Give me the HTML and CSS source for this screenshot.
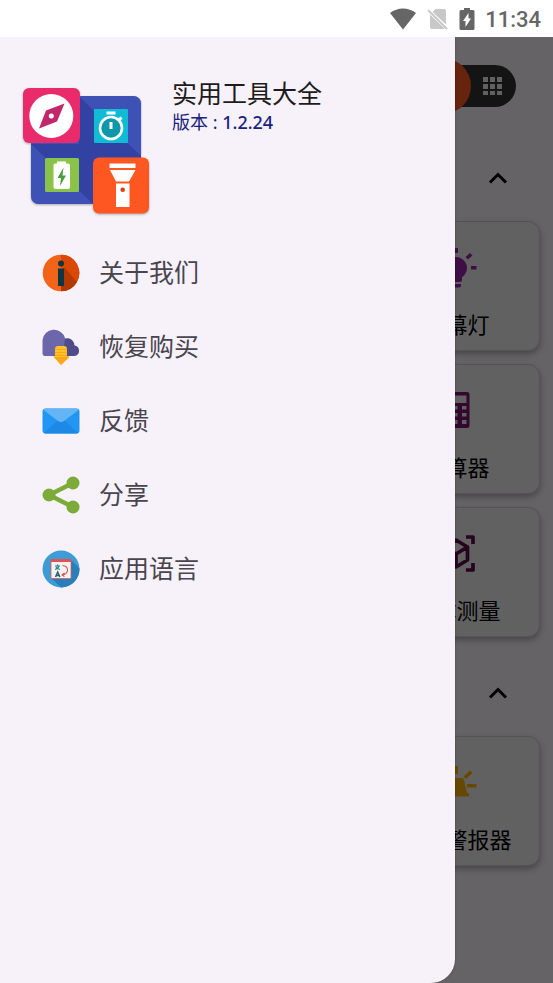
FILE: index.html
```
<!DOCTYPE html>
<html lang="zh-CN">
<head>
    <meta charset="UTF-8">
    <meta name="viewport" content="width=device-width, initial-scale=1.0">
    <title>实用工具大全</title>
    <link rel="stylesheet" href="styles.css">
</head>
<body>

<div class="status-bar">
    <svg width="28" height="22" viewBox="0 0 28 22"><path fill="#666" d="M1 5C8.500-1 19.500-1 27 5L14 21.500z"/></svg>
    <svg width="22" height="22" viewBox="0 0 22 22"><path fill="#c8c8c8" d="M8.500 1H17a2 2 0 0 1 2 2v13.500L5.500 4zM3 6.500L18 21H5a2 2 0 0 1-2-2z"/><path stroke="#c8c8c8" stroke-width="2" d="M1 2l19 19"/></svg>
    <svg width="16" height="22" viewBox="0 0 16 22"><path fill="#666" d="M5 0h6v2h3q1.500 0 1.500 1.500v17q0 1.500-1.500 1.500H2q-1.500 0-1.500-1.500v-17Q.5 2 2 2h3z"/><path fill="#fff" d="M9.500 5v5.500H12L6.500 19v-6H4z"/></svg>
    <span class="clock">11:34</span>
</div>

<div class="screen">
    <main class="home">
        <div class="toolbar">
            <button class="view-switch" aria-label="网格视图">
                <span class="knob"></span>
                <svg width="20" height="20" viewBox="0 0 20 20"><path fill="#f2f2f2" d="M0 1h5v5H0zM7 1h5v5H7zM14 1h5v5h-5zM0 8h5v5H0zM7 8h5v5H7zM14 8h5v5h-5zM0 15h5v4H0zM7 15h5v4H7zM14 15h5v4h-5z"/></svg>
            </button>
        </div>

        <section>
            <div class="section-head">
                <button class="collapse" aria-label="收起"><svg width="20" height="14" viewBox="0 0 20 14"><path fill="none" stroke="#000" stroke-width="3" d="M2 11.500l8-8 8 8"/></svg></button>
            </div>
            <div class="grid">
                <button class="card">
                    <svg width="40" height="40" viewBox="0 0 40 40" fill="#9c27b0"><path d="M19 9a11 11 0 0 1 6 20.200V32q0 2-2 2h-8q-2 0-2-2v-2.800A11 11 0 0 1 19 9zM14 36h10v1.500q0 2-2 2h-6q-2 0-2-2zM17 0h4v5h-4zM34 18h5.500v3.500H34zM0 18h4v3.500H0zM28.500 9L33 5l2.500 2.500L31 11.500zM9.500 9L5 5 2.500 7.500 7 11.500z"/></svg>
                    <span>屏幕灯</span>
                </button>
                <button class="card">
                    <svg width="40" height="40" viewBox="0 0 40 40"><path fill="#7d1470" fill-rule="evenodd" d="M8 1h22q2.500 0 2.500 2.500v31Q32.500 37 30 37H8q-2.500 0-2.500-2.500v-31Q5.500 1 8 1zM9 4.500V12h20.500V4.500zM9 15h3.500v3.500H9zM16.500 15h4v3.500h-4zM25 15h4.500v3.500H25zM9 22h3.500v3.500H9zM16.500 22h4v3.500h-4zM25 22h4.500v3.500H25zM9 29h3.500v4H9zM16.500 29h4v4h-4zM25 29h4.500v4H25z"/></svg>
                    <span>计算器</span>
                </button>
                <button class="card">
                    <svg width="40" height="40" viewBox="0 0 40 40" fill="none" stroke="#600c4c" stroke-width="3.700" stroke-linejoin="round"><path d="M29 3h7v7M29 36h7v-7M9 3H3v7M9 36H3v-7M19 6l11.500 7v13L19 33 7.500 26V13zM7.500 13L19 20l11.500-7M19 20v13"/></svg>
                    <span>立体测量</span>
                </button>
            </div>
        </section>

        <section class="next">
            <div class="section-head">
                <button class="collapse" aria-label="收起"><svg width="20" height="14" viewBox="0 0 20 14"><path fill="none" stroke="#000" stroke-width="3" d="M2 11.500l8-8 8 8"/></svg></button>
            </div>
            <div class="grid">
                <button class="card">
                    <svg width="40" height="40" viewBox="0 0 40 40" fill="#ffb300"><path d="M13 15h12q1.500 0 2 2l3 13h2v3.500H6V30h2l3-13q.5-2 2-2zM17 3h4v8h-4zM30 21h9.500v3.500H30zM0 21h8v3.500H0zM26.500 13.500l6.500-6 2.500 2.500-6.500 6zM11.500 13.500L5 7.500 2.500 10 9 16z"/></svg>
                    <span>声音警报器</span>
                </button>
            </div>
        </section>
    </main>

    <div class="scrim"></div>

    <nav class="drawer">
        <header class="about">
            <svg class="logo" width="128" height="130" viewBox="0 0 128 130">
                <rect x="9" y="10" width="110" height="108" rx="8" fill="#3f51b5"/>
                <path fill="#303f9f" opacity=".8" d="M57 10l62 60v48H71L9 58h48z"/>
                <path fill="#3f51b5" opacity=".7" d="M57 10h54q8 0 8 8v40L94 57 70 23zM9 59l14 13v34h34l14 12H17q-8 0-8-8z"/>
                <rect x="1" y="2" width="57" height="55" rx="6" fill="#e92a6b"/>
                <circle cx="29.300" cy="30" r="22" fill="#fff"/>
                <path fill="#c2276b" d="M42.500 17.500L24 24.500 17 42.500l18-7z"/>
                <circle cx="29.300" cy="30" r="2.500" fill="#fff"/>
                <rect x="72" y="23" width="34" height="34" rx="1" fill="#0fbcd4"/>
                <circle cx="89" cy="42" r="11" fill="#0e98a9" stroke="#fff" stroke-width="2.600"/>
                <path stroke="#fff" stroke-width="3" d="M84.500 27h9M89 36v7M97 34l2.500-2.500"/>
                <rect x="23" y="72" width="34" height="34" rx="1.500" fill="#8bc34a"/>
                <path fill="#fff" d="M35 75.500h9v2h2q2 0 2 2V101q0 2-2 2H33.500q-2 0-2-2V79.500q0-2 2-2H35z"/>
                <path fill="#4f9a3a" d="M41.500 81.500L35.500 92H39l-1 8 6-10.500h-3.500z"/>
                <rect x="71" y="71.500" width="56" height="56" rx="6" fill="#ff5722"/>
                <path fill="#fff" d="M87.500 77.500h26V82h-26zM88 84h25.500L107 95.500H94zM94 97.500h13.500v23.500H94z"/>
                <circle cx="100.700" cy="103.700" r="2.300" fill="#d84315"/>
            </svg>
            <div>
                <h1>实用工具大全</h1>
                <p>版本 : <span class="version">1.2.24</span></p>
            </div>
        </header>

        <a class="item" href="#">
            <svg width="38" height="38" viewBox="0 0 38 38"><circle cx="19" cy="19" r="18.300" fill="#f26418"/><path fill="#d94905" d="M19 .7a18.300 18.300 0 0 1 15.500 28L19 13z"/><path fill="#b23a02" d="M22 13l13 15A18.300 18.300 0 0 1 19 37.300V32l3-1z"/><circle cx="19" cy="9.500" r="3" fill="#0f3443"/><path fill="#0f3443" d="M16 14.500h6V32h-6z"/></svg>
            <span>关于我们</span>
        </a>
        <a class="item" href="#">
            <svg width="38" height="38" viewBox="0 0 38 38"><path fill="#4f4c8c" d="M18 28V15a7.500 7.500 0 0 1 14.500 2.500A5.300 5.300 0 0 1 32.500 28z"/><path fill="#6c66aa" d="M3 28q-2.500 0-2.500-3V12A11.500 11.500 0 0 1 23 10l-2 18z"/><path fill="#ffc425" d="M13 21q0-3 3-3h6q3 0 3 3v7h2.500L19 37l-8-9h2z"/><path fill="#ffa61a" d="M13 24h12v1H13zM13 27h12v1H13zM13 21h12v1H13zM12 29h15.500L19 37z"/></svg>
            <span>恢复购买</span>
        </a>
        <a class="item" href="#">
            <svg width="38" height="38" viewBox="0 0 38 38"><rect x=".5" y="6.500" width="37" height="25" rx="3" fill="#2196f3"/><path fill="#1e88e5" d="M2 31L15 19h8l13 12q-1 .5-2 .5H4q-1 0-2-.5z"/><path fill="#64b5f6" d="M1.500 8Q2 6.500 4 6.500h30q2 0 2.500 1.500L22 19q-3 2.200-6 0z"/></svg>
            <span>反馈</span>
        </a>
        <a class="item" href="#">
            <svg width="38" height="38" viewBox="0 0 38 38"><path fill="none" stroke="#7cab3a" stroke-width="4.500" d="M31 7L7 19l24 12"/><g fill="#7cab3a"><circle cx="31" cy="7" r="6.500"/><circle cx="7" cy="19" r="6.500"/><circle cx="31" cy="31" r="6.500"/></g></svg>
            <span>分享</span>
        </a>
        <a class="item" href="#">
            <svg width="38" height="38" viewBox="0 0 38 38"><circle cx="19" cy="19" r="18.500" fill="#3d9bd6"/><path fill="#2a7fba" d="M29 10l8.500 8.500A18.500 18.500 0 0 1 19 37.500L9 28z"/><path fill="#f5f3f2" stroke="#dc5a5a" stroke-width=".8" d="M9 9.500h20v19H9z"/><path fill="#e05353" d="M9 9h20v3H9z"/><path fill="none" stroke="#1f7f86" stroke-width="1.200" d="M13 16h5M15.500 14.500V16M17 16q-.5 2.500-4 3.500M14 17q1 2 4 2.500"/><path fill="none" stroke="#1d6670" stroke-width="1.500" d="M13.500 27l2.200-5 2.200 5M14 25.500h3.500"/><path fill="none" stroke="#d9534f" stroke-width="1.100" d="M20.500 15.500q5 .5 5 4.500t-5 5M22.500 23l-2.500 2 2.500 1.500"/></svg>
            <span>应用语言</span>
        </a>
    </nav>
</div>

</body>
</html>
```
FILE: styles.css
```
* {
    box-sizing: border-box;
}
body {
    margin: 0;
    min-height: 100vh;
    display: flex;
    flex-direction: column;
    font-family: "Noto Sans CJK SC", sans-serif;
    background-color: #fff;
}
svg {
    display: block;
    flex: none;
}
button {
    padding: 0;
    border: none;
    background: none;
    font-family: inherit;
    cursor: pointer;
}

/* Status bar */
.status-bar {
    height: 37px;
    padding: 0 12px;
    display: flex;
    align-items: center;
    justify-content: flex-end;
    gap: 10px;
}
.clock {
    padding-top: 3px;
    font-family: Roboto, sans-serif;
    font-size: 22px;
    font-weight: 500;
    line-height: 24px;
    color: #666;
}

/* Home screen under the drawer */
.screen {
    position: relative;
    flex: 1;
    overflow: hidden;
    background-color: #fef7ff;
}
.home {
    padding: 0 13px;
}
.toolbar {
    padding: 28px 24px;
    display: flex;
    justify-content: flex-end;
}
.view-switch {
    width: 101px;
    height: 42px;
    padding-right: 13px;
    display: flex;
    align-items: center;
    justify-content: space-between;
    border-radius: 21px;
    background-color: #343434;
}
.knob {
    width: 56px;
    height: 56px;
    border-radius: 50%;
    background-color: #ff5722;
}
.next {
    margin-top: 13px;
}
.section-head {
    height: 86px;
    padding-right: 32px;
    display: flex;
    align-items: center;
    justify-content: flex-end;
}
.grid {
    display: grid;
    grid-template-columns: repeat(3, 1fr);
    gap: 13px;
}
.card {
    grid-column: 3;
    height: 130px;
    padding-top: 26px;
    display: flex;
    flex-direction: column;
    align-items: center;
    gap: 19px;
    border: 1px solid #d4d0d6;
    border-radius: 12px;
    background-color: #f2f2f2;
    box-shadow: 0 3px 6px rgba(0, 0, 0, 0.3);
    font-size: 22px;
    line-height: 32px;
    color: #000;
}
.scrim {
    position: absolute;
    inset: 0;
    background-color: rgba(0, 0, 0, 0.6);
}

/* Drawer */
.drawer {
    position: absolute;
    top: 0;
    bottom: 0;
    left: 0;
    width: calc(100% - 98px);
    border-radius: 0 0 24px 0;
    background-color: #f7f2fa;
    box-shadow: 0 0 2px rgba(0, 0, 0, 0.4);
}
.about {
    padding: 40px 22px 20px;
    display: flex;
    align-items: flex-start;
    gap: 22px;
}
.logo {
    margin-top: 9px;
    filter: drop-shadow(0 1px 1px rgba(0, 0, 0, 0.3));
}
h1 {
    margin: 0;
    font-size: 25px;
    font-weight: 400;
    line-height: 30px;
    color: #1d1b20;
}
.about p {
    margin: 0;
    font-family: "Noto Sans", "Noto Sans CJK SC", sans-serif;
    font-size: 18px;
    line-height: 30px;
    color: #1a237e;
}
.version {
    font-weight: 500;
}
.item {
    height: 74px;
    padding-left: 42px;
    display: flex;
    align-items: center;
    gap: 19px;
    font-size: 25px;
    line-height: 36px;
    color: #49454f;
    text-decoration: none;
}
.item span {
    padding-bottom: 4px;
}
```
